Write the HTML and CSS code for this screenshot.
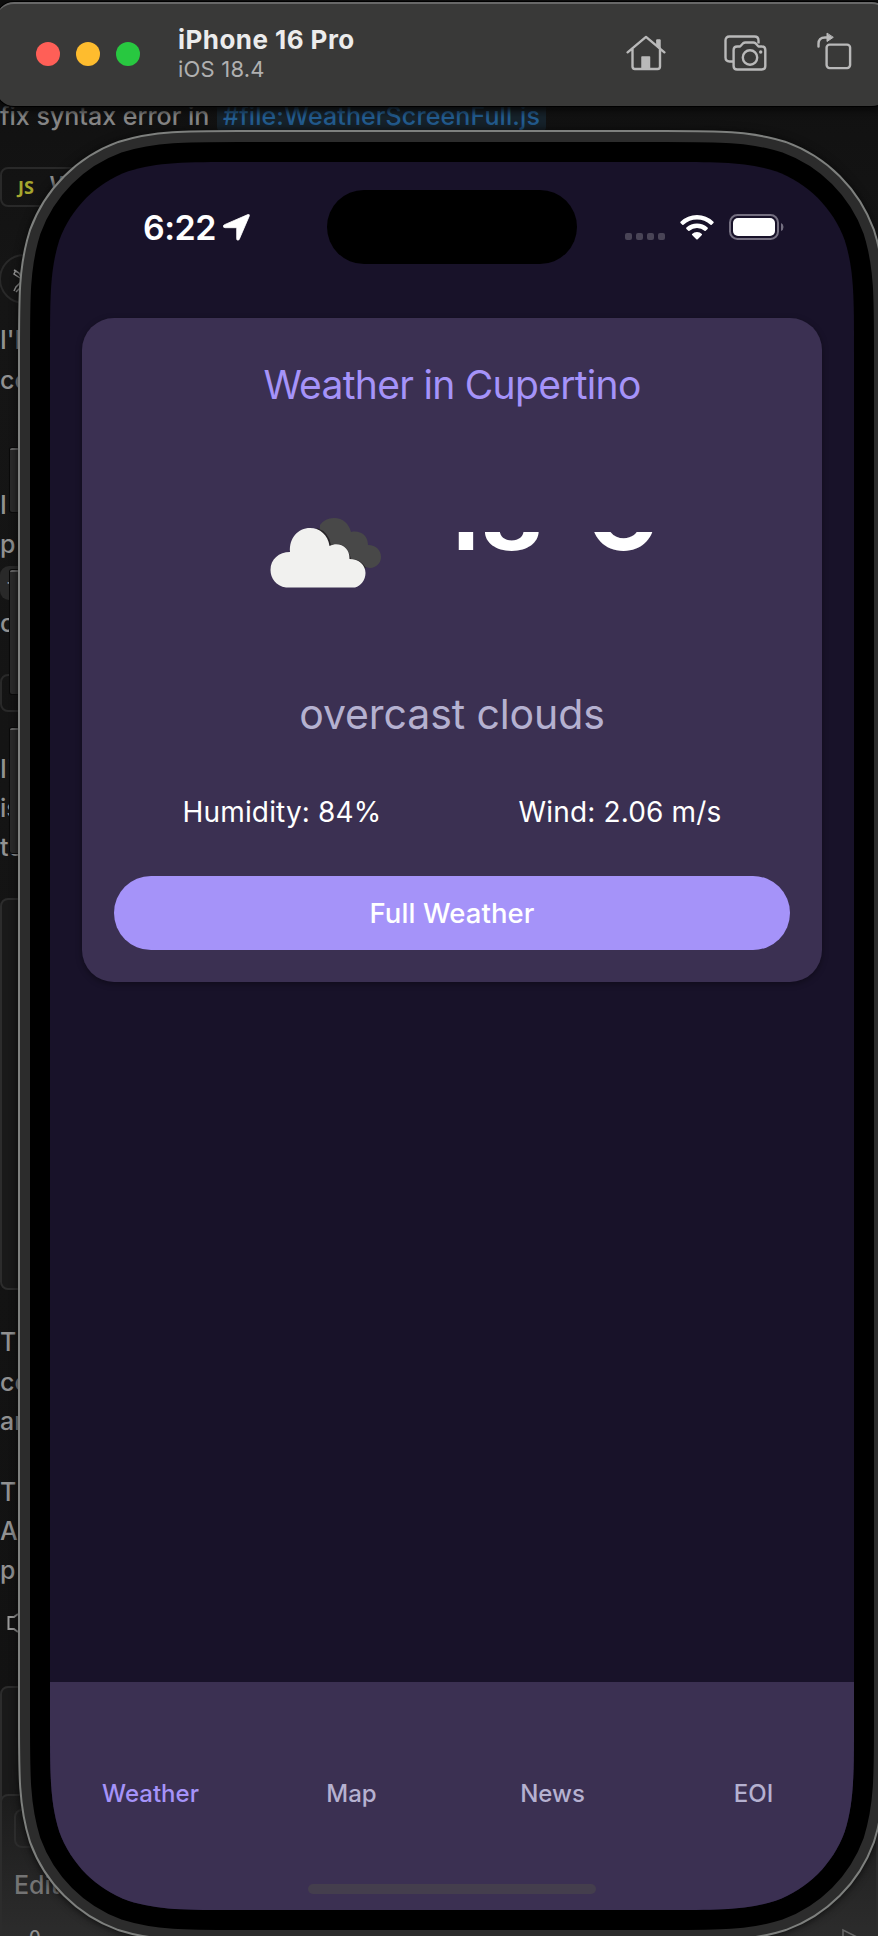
FILE: index.html
```html
<!DOCTYPE html>
<html lang="en">
<head>
<meta charset="utf-8">
<title>iPhone 16 Pro</title>
<link rel="stylesheet" href="styles.css">
</head>
<body>
<div class="desktop">
  <div class="editor">
    <p class="prompt">fix syntax error in <span class="file">#file:WeatherScreenFull.js</span></p>
    <span class="item chip chip-js" style="top:167px"><b>JS</b> Wea</span>
    <span class="item avatar" style="top:254px"><svg width="28" height="28" viewBox="0 0 28 28"><path d="M1 2l5 3 3 6M1 23l2-4 7-7M3 2l-2 4 6 4M3 24l6-6" fill="none" stroke="#999" stroke-width="1.5"/></svg></span>
    <p class="item" style="top:324px">I'll</p>
    <p class="item" style="top:364px">co</p>
    <p class="item" style="top:489px">I</p>
    <p class="item" style="top:528px">p</p>
    <span class="item pill" style="top:566px">+</span>
    <p class="item" style="top:607px">c</p>
    <span class="item chip small" style="top:674px"></span>
    <p class="item" style="top:753px">I'</p>
    <p class="item" style="top:792px">is</p>
    <p class="item" style="top:831px">to</p>
    <span class="item box code" style="top:898px"></span>
    <p class="item" style="top:1326px">T</p>
    <p class="item" style="top:1366px">co</p>
    <p class="item" style="top:1405px">an</p>
    <p class="item" style="top:1476px">T</p>
    <p class="item" style="top:1515px">A</p>
    <p class="item" style="top:1554px">p</p>
    <svg class="item horn" style="top:1612px" width="30" height="22" viewBox="0 0 30 22"><path d="M18 2l-4 3H8.500v12H14l4 3" fill="none" stroke="#999" stroke-width="2"/></svg>
    <span class="item box changes" style="top:1686px"></span>
    <span class="item box input" style="top:1794px"></span>
    <span class="item box attach" style="top:1809px"></span>
    <p class="item edit" style="top:1869px">Edit</p>
    <p class="item foot" style="top:1922px">0</p>
    <svg class="item send" width="20" height="12" viewBox="0 0 20 12"><path d="M1 12V2l18 9" fill="none" stroke="#666" stroke-width="1.6"/></svg>
  </div>

  <header class="titlebar">
    <div class="lights"><i class="red"></i><i class="yellow"></i><i class="green"></i></div>
    <div class="device"><strong>iPhone 16 Pro</strong><span>iOS 18.4</span></div>
    <div class="tools">
      <svg width="40" height="36" viewBox="0 0 40 36" fill="none" stroke="#b9b9b9" stroke-width="2.4" stroke-linecap="round" stroke-linejoin="round"><path d="M1.600 17.300L20 1.900l18.400 15.400M6.500 13.500v18q0 2.500 2.500 2.500h22.500q2.500 0 2.500-2.500v-18"/><path d="M31 4.800h3.200V14.500L31 11.500z" fill="#b9b9b9" stroke-width="1"/><path d="M16 22h7.500v12H16z" fill="#b9b9b9" stroke-width="1.500"/></svg>
      <svg width="44" height="36" viewBox="0 0 44 36" fill="none" stroke="#b9b9b9" stroke-width="2.400" stroke-linejoin="round"><path d="M9 26.500H5.500Q1.500 26.500 1.500 22.500V5.500Q1.500 1.500 5.500 1.500H30.500Q34.500 1.500 34.500 5.500V8.500"/><path d="M9.600 15q0-3.500 3.500-3.500h3l3-3.200q1-.8 2.200-.8h8q1.200 0 2.200.8l3 3.200h3.300q3.500 0 3.500 3.500V31q0 3.500-3.500 3.500H13.100q-3.500 0-3.500-3.500z"/><circle cx="26" cy="22.500" r="7.200"/><circle cx="36.700" cy="17" r="1.700" fill="#b9b9b9" stroke="none"/></svg>
      <svg width="35" height="38" viewBox="0 0 35 38" fill="none" stroke="#b9b9b9" stroke-width="2.400" stroke-linecap="round"><rect x="9.600" y="12.600" width="23.500" height="23.500" rx="3"/><path d="M1.500 14.500V12Q1.500 5.500 8 5.500h2"/><path d="M10 1.500v8l6-4z" fill="#b9b9b9" stroke-width="1"/></svg>
    </div>
  </header>

  <div class="side-button action"></div>
  <div class="side-button up"></div>
  <div class="side-button down"></div>

  <main class="phone">
    <svg class="frame" width="868" height="1812" viewBox="-32 -32 868 1812" fill="none">
      <defs><path id="bezel" d="M0 189.550C0 134.970 0 107.680 9.290 78.310C20.960 46.230 46.230 20.960 78.310 9.290C107.680 0 134.970 0 189.550 0H614.450C669.030 0 696.320 0 725.690 9.290C757.770 20.960 783.040 46.230 794.710 78.310C804 107.680 804 134.970 804 189.550V1558.450C804 1613.030 804 1640.320 794.710 1669.690C783.040 1701.770 757.770 1727.040 725.690 1738.710C696.320 1748 669.030 1748 614.450 1748H189.550C134.970 1748 107.680 1748 78.310 1738.710C46.230 1727.040 20.960 1701.770 9.290 1669.690C0 1640.320 0 1613.030 0 1558.450Z"/></defs>
      <use href="#bezel" stroke="#7e807e" stroke-width="64"/>
      <use href="#bezel" stroke="#2c2c2c" stroke-width="60"/>
      <use href="#bezel" stroke="#000" stroke-width="40" fill="#181229"/>
    </svg>
    <div class="screen">
      <div class="status">
        <div class="time">6:22<svg width="27" height="27" viewBox="0 0 27 27"><path d="M24.800.6Q27 0 26.200 2.200L16.300 25.200Q15.600 26.600 14.300 26Q13.700 25.700 13.700 24.800V14.400Q13.700 13.700 13 13.700H2Q0 13.500.3 12.100Q.5 11.200 1.500 10.700Z" fill="#fff" stroke="#fff" stroke-width=".8"/></svg></div>
        <div class="island"></div>
        <div class="signals">
          <span class="dots"><i></i><i></i><i></i><i></i></span>
          <svg width="34" height="25" viewBox="0 0 34 25" fill="#fff"><path d="M17 0Q26.500 0 33.500 6.700Q34 7.300 33.500 7.900L31.700 9.700Q31.100 10.200 30.500 9.700Q24.700 4.500 17 4.500Q9.300 4.500 3.500 9.700Q2.900 10.200 2.300 9.700L.5 7.900Q0 7.300.5 6.700Q7.500 0 17 0Z"/><path d="M17 8.500Q23.200 8.500 27.600 12.600Q28.200 13.300 27.600 13.900L25.700 15.700Q25.100 16.200 24.500 15.700Q21.400 13 17 13Q12.600 13 9.500 15.700Q8.900 16.200 8.300 15.700L6.400 13.900Q5.800 13.300 6.400 12.600Q10.800 8.500 17 8.500Z"/><path d="M17 17Q20 17 21.900 18.900Q22.300 19.400 21.900 19.900L17.700 24.200Q17 24.900 16.300 24.200L12.100 19.900Q11.700 19.400 12.100 18.900Q14 17 17 17Z"/></svg>
          <svg width="55" height="26" viewBox="0 0 55 26"><rect x="1" y="1" width="48" height="24" rx="7.500" fill="none" stroke="#746f80" stroke-width="2"/><rect x="4" y="4" width="42" height="18" rx="5" fill="#fff"/><path d="M52 9Q54.500 10 54.500 13T52 17Z" fill="#746f80"/></svg>
        </div>
      </div>

      <section class="card">
        <h1>Weather in Cupertino</h1>
        <div class="now">
          <svg class="clouds" width="112" height="72" viewBox="0 0 112 72"><path fill="#484848" d="M64 1c9 0 15 6 17 14c9-2 17 3 17 13c8 0 13 5 13 12c0 8-8 13-15 10L50 40V8Q55 1 64 1Z"/><path fill="#262326" d="M47 11Q59 15 61 28Q76 23 81 42Q91 42 96 51L90 53L43 48Z"/><path fill="#f1f1ef" d="M16 70.500C6 69 .500 61 .500 53C.500 42 9 35 20 35C19 21 28 11 40 11C50 11 58 18 59.500 29C69 24 80 30 79.500 42C89 42 95.500 48 95.500 56C95.500 63 91 69 85 70.500Z"/></svg>
          <div class="temp"><span>18°C</span></div>
        </div>
        <p class="desc">overcast clouds</p>
        <div class="stats"><span>Humidity: 84%</span><span>Wind: 2.06 m/s</span></div>
        <button>Full Weather</button>
      </section>

      <nav class="tabs">
        <span class="active">Weather</span><span>Map</span><span>News</span><span>EOI</span>
        <i class="indicator"></i>
      </nav>
    </div>
  </main>
</div>
</body>
</html>
```
FILE: styles.css
```css
* { box-sizing: border-box; }
body { margin: 0; font-family: Inter, "Liberation Sans", sans-serif; }
p, h1 { margin: 0; }
.desktop { position: relative; width: 878px; height: 1936px; overflow: hidden; background: #111; }

/* Editor window behind the simulator */
.editor { position: absolute; inset: 0; background: linear-gradient(#0f0f0f, #151515 14%, #121212 90%, #242424 96%, #272727); color: #919191; font-size: 25px; line-height: 32px; font-weight: 500; }
.prompt { padding-top: 100px; white-space: nowrap; color: #858585; }
.file { background: #16222b; color: #235d91; border-radius: 4px; padding: 0 6px; margin-left: 1px; letter-spacing: .1px; }
.item { position: absolute; left: 0; white-space: nowrap; }
.chip { width: 90px; height: 40px; border: 2px solid #292929; border-radius: 8px; padding: 1px 16px; }
.chip b { font: 700 18px/32px "Open Sans", sans-serif; color: #a6a62e; margin-right: 9px; vertical-align: 1px; }
.chip.small { height: 38px; }
.avatar { left: -1px; width: 50px; height: 50px; border: 2px solid #292929; border-radius: 50%; padding: 12px; }
.pill { width: 40px; height: 34px; border-radius: 9px; background: #292929; padding-left: 6px; font-size: 18px; }
.box { border: 2px solid #2c2c2c; border-radius: 8px; width: 200px; background: #191919; }
.code { height: 392px; }
.changes { height: 160px; }
.input { width: 878px; height: 180px; background: linear-gradient(#1c1c1c, #303030); }
.attach { left: 14px; height: 39px; background: none; }
.edit { left: 14px; color: #747474; }
.foot { left: 29px; font-size: 18px; }
.send { left: 842px; top: 1928px; }

/* Simulator title bar */
.titlebar { position: absolute; left: -4px; top: 2px; width: 894px; height: 104px; border-radius: 18px; background: #393938; border-top: 2px solid #686868; box-shadow: 0 0 0 1px #000, 0 3px 7px 2px #090909; display: flex; align-items: center; padding: 0 42px 2px 40px; }
.lights { display: flex; gap: 16px; width: 142px; }
.lights i { width: 24px; height: 24px; border-radius: 50%; }
.red { background: #ff5f57; }
.yellow { background: #febc2e; }
.green { background: #28c840; }
.device { display: flex; flex-direction: column; flex: 1; color: #ececec; }
.device strong { font-size: 26px; line-height: 31px; letter-spacing: .45px; }
.device span { font-size: 22px; line-height: 29px; color: #b0b0b0; letter-spacing: .2px; }
.tools { display: flex; align-items: center; padding-bottom: 2px; }
.tools svg { margin-right: 58px; }
.tools svg:nth-child(2) { margin-right: 49px; }
.tools svg:nth-child(3) { margin: 0 -4px 4px 0; }

/* Phone hardware */
.side-button { position: absolute; left: 10px; width: 10px; background: #2b2b2b; border-top: 2px solid #686868; border-radius: 2px; box-shadow: 0 0 0 1px #0a0a0a; }
.action { top: 448px; height: 64px; }
.up { top: 570px; height: 124px; }
.down { top: 728px; height: 125px; }
.phone { position: absolute; left: 18px; top: 130px; width: 868px; height: 1812px; padding: 32px; }
.frame { position: absolute; left: 0; top: 0; filter: drop-shadow(0 0 4px #080808); }
.screen { position: relative; height: 1748px; display: flex; flex-direction: column; background: #181229; clip-path: path("M0 189.550C0 134.970 0 107.680 9.290 78.310C20.960 46.230 46.230 20.960 78.310 9.290C107.680 0 134.970 0 189.550 0H614.450C669.030 0 696.320 0 725.690 9.290C757.770 20.960 783.040 46.230 794.710 78.310C804 107.680 804 134.970 804 189.550V1558.450C804 1613.030 804 1640.320 794.710 1669.690C783.040 1701.770 757.770 1727.040 725.690 1738.710C696.320 1748 669.030 1748 614.450 1748H189.550C134.970 1748 107.680 1748 78.310 1738.710C46.230 1727.040 20.960 1701.770 9.290 1669.690C0 1640.320 0 1613.030 0 1558.450Z"); }

/* Status bar */
.status { height: 156px; padding: 28px 70px 0 93px; display: flex; justify-content: space-between; align-items: flex-start; color: #fff; }
.time { display: flex; align-items: center; width: 184px; height: 74px; gap: 7px; font-size: 34px; font-weight: 600; letter-spacing: -.5px; }
.island { width: 251px; height: 74px; border-radius: 37px; background: #000; }
.signals { width: 207px; height: 74px; display: flex; align-items: center; justify-content: flex-end; gap: 15px; }
.dots { display: flex; gap: 4px; padding-top: 18px; }
.dots i { width: 7px; height: 7px; border-radius: 2px; background: #494456; }

/* Weather card */
.card { margin: 0 32px; height: 664px; border-radius: 32px; padding: 41px 32px 32px; background: #3b3052; box-shadow: 0 2px 6px rgba(0,0,0,.35); display: flex; flex-direction: column; color: #fff; }
h1 { text-align: center; font-size: 39px; line-height: 52px; font-weight: 400; color: #a593f9; letter-spacing: -.7px; }
.now { display: flex; height: 200px; margin-top: 46px; padding: 60px 0 0 156px; }
.temp { margin-top: 15px; margin-left: 56px; width: 260px; height: 90px; overflow: hidden; font-size: 96px; line-height: 100px; font-weight: 700; letter-spacing: 1px; }
.temp span { display: block; margin-top: -67px; white-space: nowrap; }
.desc { text-align: center; font-size: 41px; line-height: 52px; margin-top: 31px; color: #b5b1d0; letter-spacing: -.1px; }
.stats { display: flex; justify-content: space-around; margin-top: 55px; font-size: 28px; line-height: 34px; letter-spacing: .15px; }
.card button { margin-top: auto; height: 74px; border: 0; border-radius: 37px; background: #a593f9; color: #fff; font: 500 27.5px Inter, sans-serif; letter-spacing: .1px; }

/* Tab bar */
.tabs { position: relative; display: flex; height: 228px; margin-top: auto; padding-top: 97px; background: #3b3052; font-size: 24px; line-height: 30px; font-weight: 500; color: #b5b1d0; }
.tabs span { flex: 1; text-align: center; }
.tabs .active { color: #a593f9; }
.indicator { position: absolute; left: 258px; bottom: 16px; width: 288px; height: 10px; border-radius: 5px; background: #443e4d; }
```
